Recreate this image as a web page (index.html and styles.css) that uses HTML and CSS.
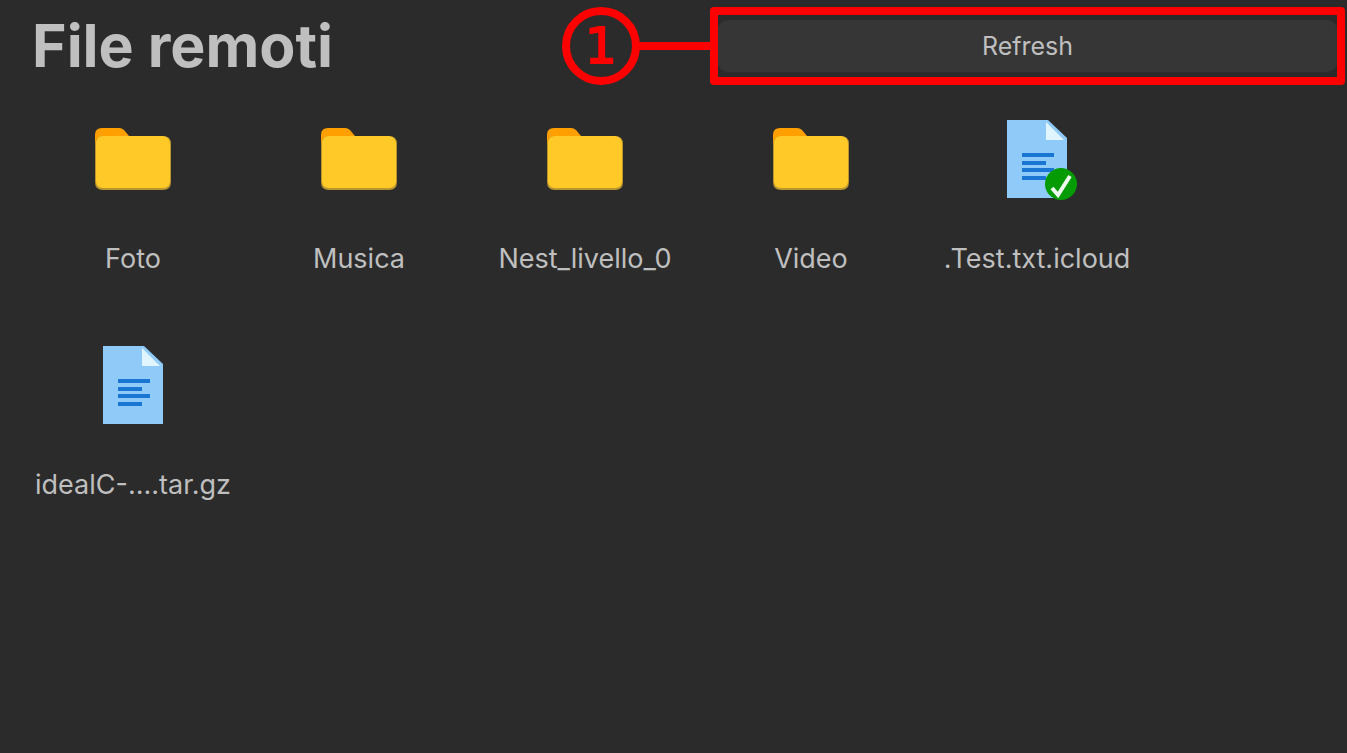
FILE: index.html
```html
<!DOCTYPE html>
<html lang="it">
<head>
<meta charset="utf-8">
<meta name="viewport" content="width=device-width, initial-scale=1">
<title>File remoti</title>
<link rel="stylesheet" href="styles.css">
</head>
<body>
<svg class="defs" aria-hidden="true">
  <symbol id="folder" viewBox="0 0 80 80">
    <path fill="#ffa000" d="M2 24V16Q2 9 9 9H26Q29 9 31 11L36 17H60V30H2z"/>
    <path fill="#b9952d" d="M2 26Q2 17 10 17H70Q78 17 78 25V63Q78 71 70 71H10Q2 71 2 63z"/>
    <path fill="#ffca28" d="M3 25Q3 17 10 17H70Q77 18 77 25V62Q77 69 70 69H10Q3 69 3 62z"/>
  </symbol>
  <symbol id="file" viewBox="0 0 80 80">
    <path fill="#90caf9" d="M10 1H51L70 19V79H10z"/>
    <path fill="#e1f5fe" d="M49 3L67 21H49z"/>
    <path fill="#1976d2" d="M25 34H57V38H25zM25 42H49V46H25zM25 49H57V53H25zM25 57H49V61H25z"/>
  </symbol>
  <symbol id="check" viewBox="0 0 32 32">
    <circle cx="16" cy="16" r="16" fill="#059b05"/>
    <path fill="none" stroke="#eef8ee" stroke-width="4" d="M7 20L13 27L25 8"/>
  </symbol>
</svg>
<header class="header">
  <h1 class="title">File remoti</h1>
  <div class="action">
    <button class="refresh" type="button">Refresh</button>
    <div class="callout">
      <span class="callout-number">1</span>
      <span class="callout-line"></span>
      <span class="callout-frame"></span>
    </div>
  </div>
</header>
<main class="files">
  <figure class="item"><svg class="icon"><use href="#folder"/></svg><figcaption class="label">Foto</figcaption></figure>
  <figure class="item"><svg class="icon"><use href="#folder"/></svg><figcaption class="label">Musica</figcaption></figure>
  <figure class="item"><svg class="icon"><use href="#folder"/></svg><figcaption class="label">Nest_livello_0</figcaption></figure>
  <figure class="item"><svg class="icon"><use href="#folder"/></svg><figcaption class="label">Video</figcaption></figure>
  <figure class="item"><div class="picture"><svg class="icon"><use href="#file"/></svg><svg class="badge"><use href="#check"/></svg></div><figcaption class="label">.Test.txt.icloud</figcaption></figure>
  <figure class="item"><svg class="icon"><use href="#file"/></svg><figcaption class="label">idealC-....tar.gz</figcaption></figure>
</main>
</body>
</html>
```
FILE: styles.css
```css
* { box-sizing: border-box; }
body {
  margin: 0;
  min-height: 100vh;
  background: #2b2b2b;
  color: #bfbfbf;
  font-family: Inter, sans-serif;
}
.defs { position: absolute; width: 0; height: 0; }
.header {
  display: grid;
  grid-template-columns: 1fr 1fr;
  gap: 64px;
  align-items: center;
  padding: 10px 9px 10px 32px;
}
.title {
  margin: 0;
  font-size: 59px;
  line-height: 72px;
  font-weight: 700;
  white-space: nowrap;
}
.action { position: relative; }
.refresh {
  display: block;
  width: 100%;
  height: 52px;
  padding: 0;
  border: 0;
  border-radius: 12px;
  background: #363636;
  color: inherit;
  font: 400 25px/52px Inter, sans-serif;
}
.callout {
  position: absolute;
  inset: -13px -7px;
  display: flex;
  align-items: center;
  pointer-events: none;
  color: #ff0000;
}
.callout-frame {
  position: absolute;
  inset: 0;
  border: 8px solid;
  border-radius: 4px;
}
.callout-line {
  position: absolute;
  right: 100%;
  width: 74px;
  height: 8px;
  background: #ff0000;
}
.callout-number {
  position: absolute;
  right: calc(100% + 70px);
  width: 78px;
  height: 78px;
  border: 8px solid;
  border-radius: 50%;
  text-align: center;
  font: 400 50px/62px "DejaVu Sans", sans-serif;
  -webkit-text-stroke: 2px #ff0000;
}
.files {
  display: grid;
  grid-template-columns: repeat(auto-fill, 226px);
  grid-auto-rows: 226px;
  padding: 0 20px;
}
.item {
  display: flex;
  flex-direction: column;
  align-items: center;
  gap: 40px;
  margin: 0;
  padding-top: 27px;
}
.picture { position: relative; height: 80px; }
.icon { display: block; width: 80px; height: 80px; }
.badge {
  position: absolute;
  right: 0;
  bottom: -1px;
  width: 32px;
  height: 32px;
}
.label {
  font-size: 27px;
  line-height: 40px;
  white-space: nowrap;
}
```
